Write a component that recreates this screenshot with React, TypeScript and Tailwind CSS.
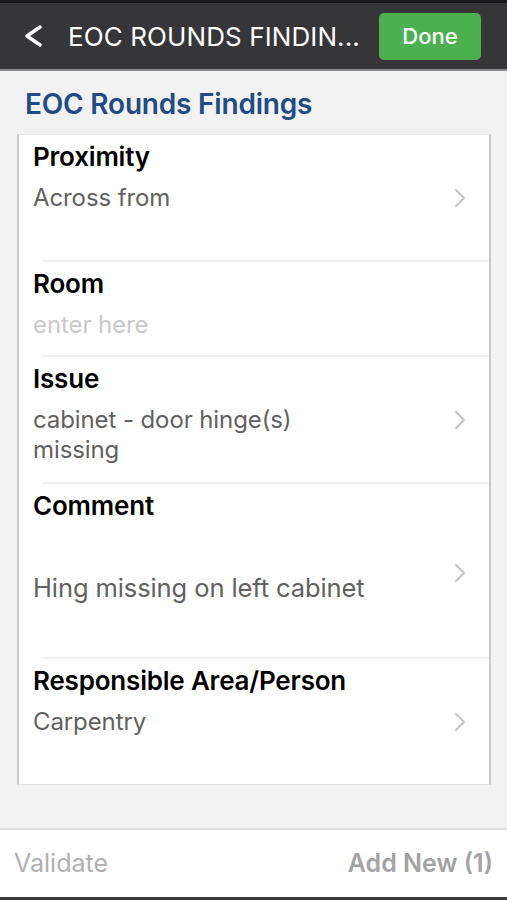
import React from 'react';

type Row = {
  label: string;
  value: string[];
  placeholder?: boolean;
  chevron?: boolean;
  // tailwind classes for the row's own spacing
  box: string;
};

const rows: Row[] = [
  { label: 'Proximity', value: ['Across from'], chevron: true, box: 'h-[127px] pt-[6px]' },
  { label: 'Room', value: ['enter here'], placeholder: true, box: 'h-[95px] pt-[6px]' },
  { label: 'Issue', value: ['cabinet - door hinge(s)', 'missing'], chevron: true, box: 'h-[127px] pt-[6px]' },
  { label: 'Comment', value: ['Hing missing on left cabinet'], chevron: true, box: 'h-[175px] pt-[6px]' },
  { label: 'Responsible Area/Person', value: ['Carpentry'], chevron: true, box: 'h-[127px] pt-[6px]' },
];

const Chevron = () => (
  <svg width="14" height="22" viewBox="0 0 14 22" fill="none" className="shrink-0">
    <path d="M3 3 L11 11 L3 19" stroke="#c4c4c4" strokeWidth="2" strokeLinecap="round" strokeLinejoin="round" />
  </svg>
);

const FieldRow: React.FC<{ row: Row; last: boolean }> = ({ row, last }) => {
  const isComment = row.label === 'Comment';
  return (
    <div className={`relative ${row.box}`}>
      <div className="pl-[14px] pr-[22px]">
        <div className="text-[26px] font-semibold text-black leading-[32px] tracking-[-0.2px]">{row.label}</div>
        <div className={`flex justify-between items-start ${isComment ? 'mt-[46px]' : 'mt-[10px]'}`}>
          <div
            className={`leading-[30px] tracking-[-0.1px] ${isComment ? 'text-[25.5px] mt-[5px]' : 'text-[24px]'} ${row.placeholder ? 'text-[#c9c9c9]' : 'text-[#616161]'}`}
          >
            {row.value.map(v => (
              <div key={v}>{v}</div>
            ))}
          </div>
          {row.chevron && (
            <div className={isComment ? 'mt-[-6px]' : 'mt-[4px]'}>
              <Chevron />
            </div>
          )}
        </div>
      </div>
      {!last && <div className="absolute bottom-0 left-[22px] right-0 h-[2px] bg-[#efefef]" />}
    </div>
  );
};

export default function App() {
  return (
    <div className="w-[507px] h-[900px] bg-[#f2f2f2] flex flex-col overflow-hidden" style={{ fontFamily: 'Inter, "Liberation Sans", sans-serif' }}>
      <header className="h-[71px] bg-[#363638] border-t-[3px] border-[#1a1a1a] border-b-[2px] border-b-[#8a8a8a] flex items-center pl-[22px] pr-[26px] shrink-0">
        <svg width="22" height="24" viewBox="0 0 22 24" fill="none" className="shrink-0">
          <path d="M18 3 L5 12 L18 21" stroke="white" strokeWidth="3.5" strokeLinecap="round" strokeLinejoin="round" />
        </svg>
        <div className="ml-[24px] text-white text-[26px] tracking-[0.1px] flex-1 whitespace-nowrap">EOC ROUNDS FINDIN...</div>
        <button className="w-[102px] h-[47px] bg-[#4caf50] rounded-[5px] text-white text-[22px] font-medium">Done</button>
      </header>

      <div className="h-[63px] flex items-center pl-[25px] shrink-0">
        <h1 className="text-[#214b86] text-[28px] font-semibold pt-[3px] tracking-[-0.2px]">EOC Rounds Findings</h1>
      </div>

      <div className="mx-[17px] w-[474px] h-[651px] bg-white border-x-[2px] border-[#c9c9c9] border-t border-t-[#e6e6e6] border-b border-b-[#e0e0e0] shrink-0">
        {rows.map((row, i) => (
          <FieldRow key={row.label} row={row} last={i === rows.length - 1} />
        ))}
      </div>

      <div className="flex-1" />

      <footer className="h-[72px] bg-white border-t-[2px] border-[#dcdcdc] border-b-[3px] border-b-[#3a3a3a] flex items-center justify-between px-[14px] shrink-0">
        <span className="text-[#b0b0b0] text-[25px]">Validate</span>
        <span className="text-[#a3a3a3] text-[25px] font-semibold">Add New (1)</span>
      </footer>
    </div>
  );
}
